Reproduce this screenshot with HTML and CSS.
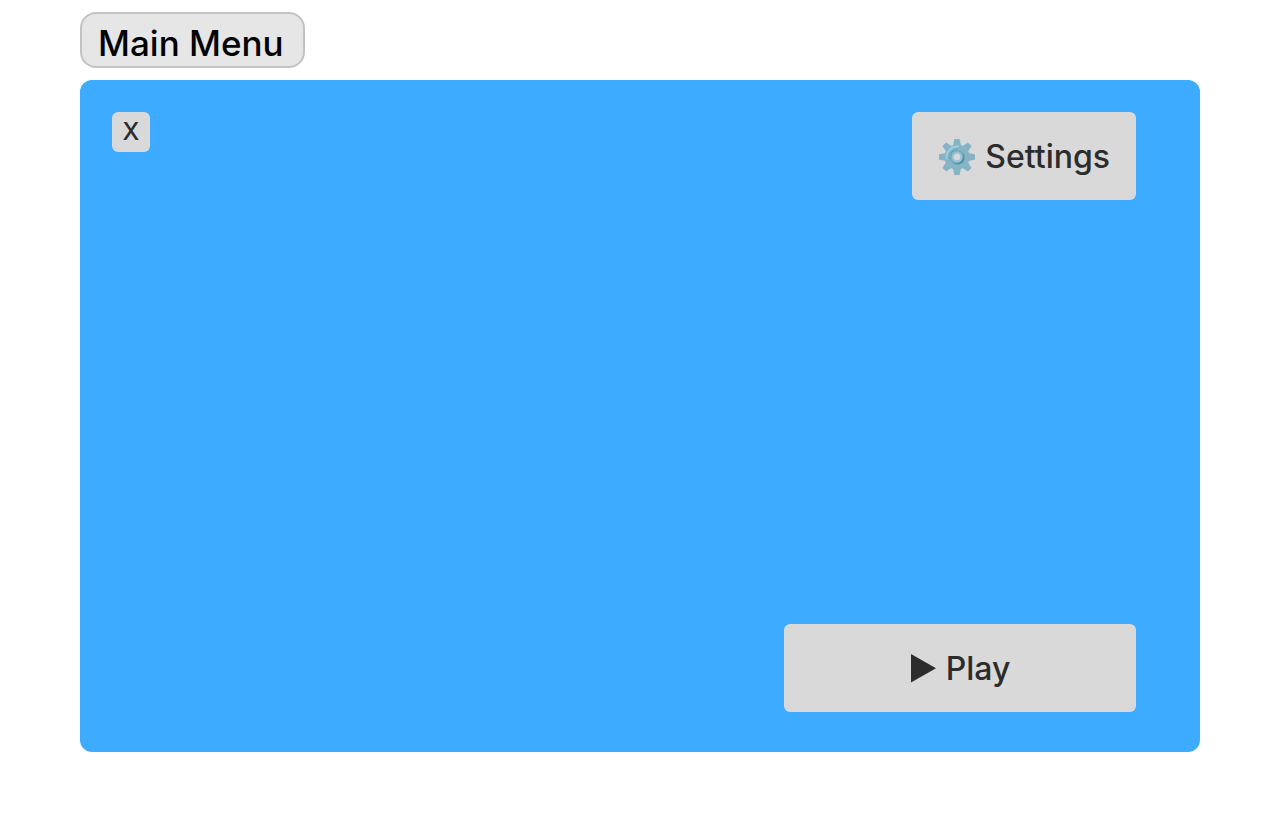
FILE: index.html
```html
<!DOCTYPE html>
<html lang="en">
<head>
<meta charset="utf-8">
<meta name="viewport" content="width=device-width, initial-scale=1">
<title>Main Menu</title>
<link rel="stylesheet" href="styles.css">
</head>
<body>
<main class="page">
  <h1 class="title">Main Menu</h1>
  <section class="panel">
    <div class="top">
      <button class="button close" type="button">X</button>
      <button class="button settings" type="button">
        <svg class="gear" viewBox="0 0 36 36" aria-hidden="true">
          <defs>
            <linearGradient id="hub" x1="0" y1="0" x2="1" y2="1">
              <stop offset="0" stop-color="#84b6c6"/>
              <stop offset="0.5" stop-color="#6daabb"/>
              <stop offset="1" stop-color="#2f7c8c"/>
            </linearGradient>
          </defs>
          <g fill="#86b3c5">
            <g id="teeth">
              <path id="tooth" d="M14 7 15.2 0.5Q15.3 0 15.8 0H20.2Q20.7 0 20.8 0.5L22 7V29L20.8 35.5Q20.7 36 20.2 36H15.8Q15.3 36 15.2 35.5L14 29Z"/>
              <use href="#tooth" transform="rotate(45 18 18)"/>
            </g>
            <use href="#teeth" transform="rotate(90 18 18)"/>
            <circle cx="18" cy="18" r="12.6"/>
          </g>
          <path d="M7.5 19A10.7 10.7 0 0 1 19 7.5" fill="none" stroke="#94d5e5" stroke-width="1.8" stroke-linecap="round"/>
          <path d="M11 19.5A7.5 7.5 0 0 1 18 11" fill="none" stroke="#589eb3" stroke-width="1.6" stroke-linecap="round"/>
          <circle cx="18.3" cy="18.3" r="6.5" fill="none" stroke="url(#hub)" stroke-width="1.6"/>
          <circle cx="18" cy="18" r="5.2" fill="#9bc4d2"/>
          <circle cx="18" cy="18" r="3.2" fill="#d9d9d9"/>
        </svg>
        <span>Settings</span>
      </button>
    </div>
    <button class="button play" type="button">
      <svg class="triangle" viewBox="0 0 25 30" aria-hidden="true"><path d="M0 0 25 14.3 0 28.6Z" fill="#2c2c2c"/></svg>
      <span>Play</span>
    </button>
  </section>
</main>
</body>
</html>
```
FILE: styles.css
```css
* {
  box-sizing: border-box;
}

body {
  margin: 0;
  background: #fff;
  font-family: Inter, "Liberation Sans", sans-serif;
}

.page {
  display: flex;
  flex-direction: column;
  gap: 12px;
  min-height: 100vh;
  padding: 12px 80px 80px;
}

.title {
  align-self: flex-start;
  margin: 0;
  padding: 7px 19px 1px 16px;
  border: 2px solid #c2c2c2;
  border-radius: 16px;
  background: #e6e6e6;
  color: #000;
  font-size: 35px;
  font-weight: 500;
  line-height: 44px;
}

.panel {
  flex: 1;
  display: flex;
  flex-direction: column;
  justify-content: space-between;
  padding: 32px 64px 40px 32px;
  border-radius: 12px;
  background: #3dabff;
}

.top {
  display: flex;
  align-items: flex-start;
  justify-content: space-between;
}

.button {
  display: flex;
  align-items: center;
  justify-content: center;
  border: 0;
  border-radius: 6px;
  background: #d9d9d9;
  color: #2c2c2c;
  font-family: inherit;
  font-size: 32px;
  font-weight: 500;
  line-height: 40px;
}

.close {
  width: 38px;
  padding: 0;
  font-size: 24px;
}

.settings,
.play {
  gap: 10px;
  padding: 25px 26px 23px 27px;
}

.play {
  align-self: flex-end;
  width: 352px;
  max-width: 100%;
}

.gear {
  width: 36px;
  height: 36px;
}

.triangle {
  width: 25px;
  height: 30px;
}
```
